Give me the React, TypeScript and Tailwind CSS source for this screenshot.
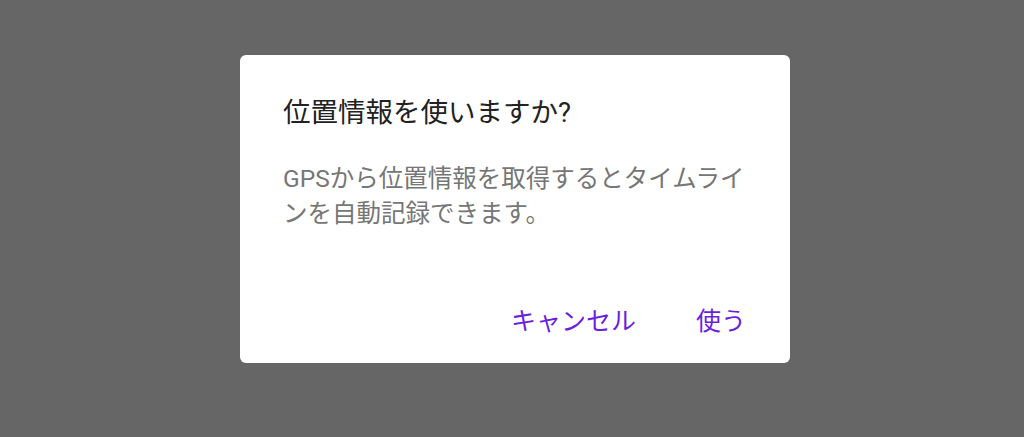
export default function App() {
  return (
    <div
      className="w-[1024px] h-[437px] bg-[#666666] pt-[55px] pl-[240px]"
      style={{ fontFamily: 'Roboto, "Noto Sans CJK JP", sans-serif' }}
    >
      <div className="w-[550px] h-[308px] bg-white rounded-[6px] flex flex-col">
        <div className="pl-[43px] pt-[38px] text-[27.5px] leading-[40px] text-[#222222]">
          位置情報を使いますか?
        </div>
        <div className="pl-[43px] pr-[20px] pt-[28px] text-[24.5px] leading-[35px] text-[#767676]">
          GPSから位置情報を取得するとタイムライ
          <br />
          ンを自動記録できます。
        </div>
        <div className="mt-auto pb-[21px] pr-[44px] flex justify-end gap-[60px] text-[25px] leading-[40px] text-[#6a1fe0]">
          <span>キャンセル</span>
          <span>使う</span>
        </div>
      </div>
    </div>
  );
}
